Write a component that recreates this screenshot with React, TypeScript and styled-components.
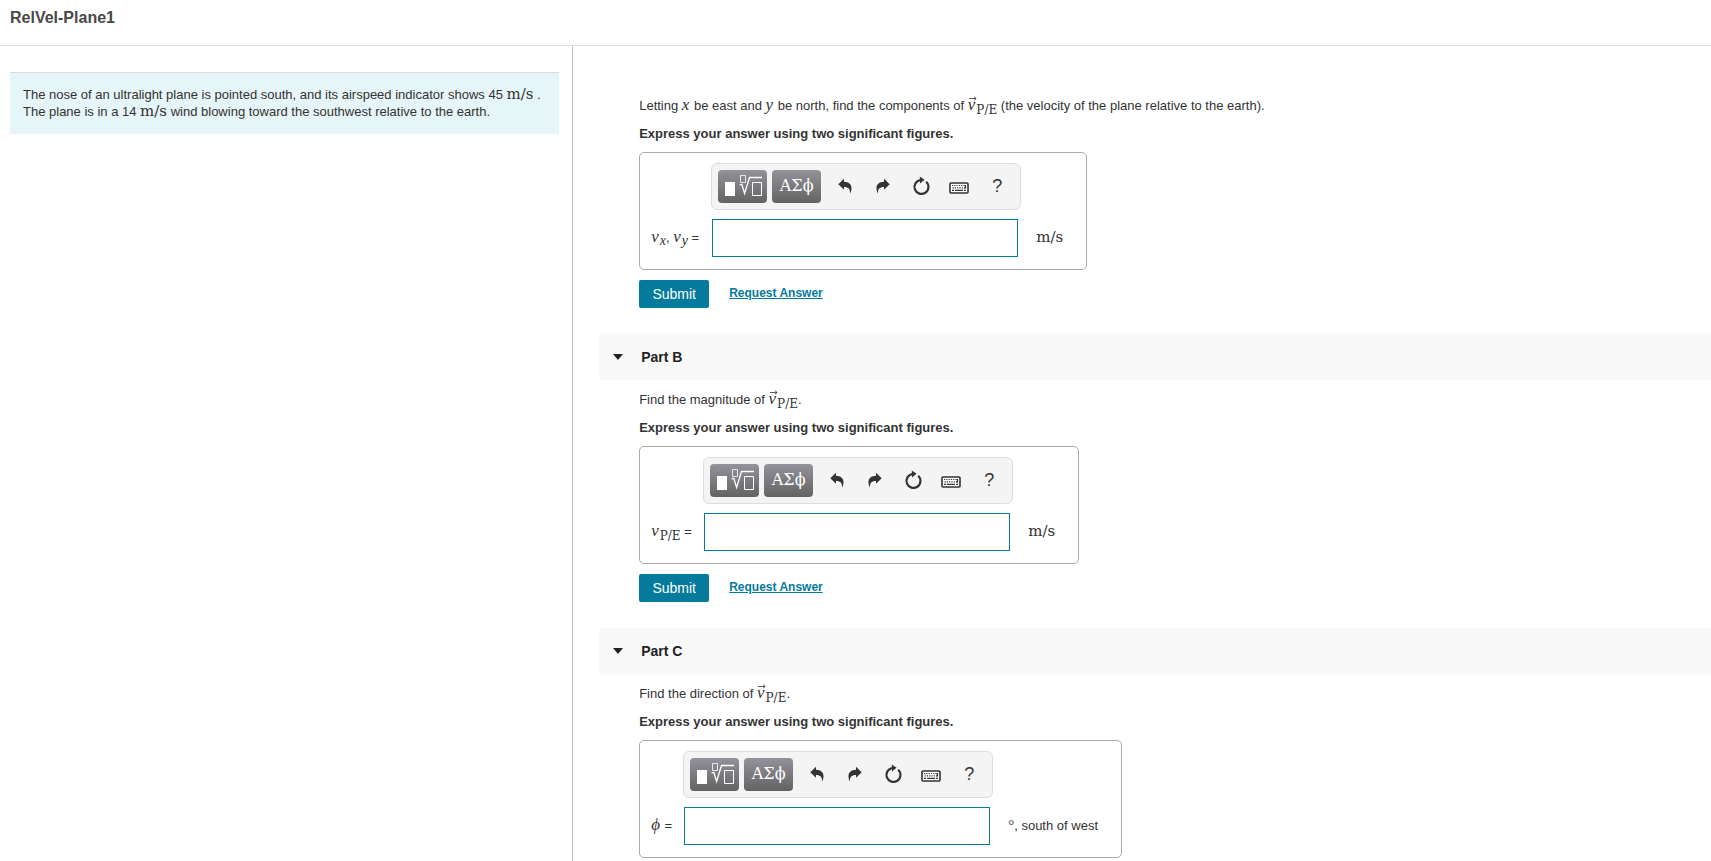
import React from "react";
import styled, { createGlobalStyle } from "styled-components";

const sans = `"Liberation Sans", Arial, Helvetica, sans-serif`;
const serif = `"Liberation Serif", "Times New Roman", serif`;
const slab = `"DejaVu Serif", Georgia, serif`;
const teal = "#047a9c";

const GlobalStyle = createGlobalStyle`
  *, *::before, *::after { box-sizing: border-box; }
  body {
    margin: 0;
    background: #fff;
    color: #333;
    font-family: ${sans};
    font-size: 13px;
  }
`;

const Page = styled.div`
  min-height: 100vh;
  display: flex;
  flex-direction: column;
`;

const Header = styled.header`
  padding: 9px 10px 18px;
  border-bottom: 1px solid #ddd;
`;

const Title = styled.h1`
  margin: 0;
  font-size: 16px;
  line-height: 18px;
  font-weight: bold;
  color: #484848;
`;

const Columns = styled.div`
  flex: 1;
  display: flex;
`;

const Side = styled.aside`
  flex: 0 0 33.5%;
  padding: 26px 13px 0 10px;
  border-right: 1px solid #b6c8d4;
`;

const Problem = styled.p`
  margin: 0;
  padding: 13px 13px 14px;
  border-top: 1px solid #d8dcdc;
  background: #e6f5f7;
  line-height: 17px;
`;

const Main = styled.main`
  flex: 1;
  min-width: 0;
  padding: 40px 0 0 26px;
`;

const PartHeader = styled.h2`
  display: flex;
  align-items: center;
  gap: 18px;
  height: 46px;
  margin: 0;
  padding-left: 14px;
  background: #f9f9f9;
  color: #222;
  font-size: 14px;
`;

const PartBody = styled.form`
  padding: 6px 24px 26px 40px;
  &:last-child { padding-bottom: 0; }
`;

const Prompt = styled.p<{ $strong?: boolean }>`
  margin: 0;
  line-height: 28px;
  font-weight: ${(p) => (p.$strong ? "bold" : "normal")};
`;

const AnswerBox = styled.div<{ $label: number }>`
  display: inline-grid;
  grid-template-columns: ${(p) => p.$label}px 306px auto;
  vertical-align: top;
  row-gap: 9px;
  margin-top: 4px;
  padding: 10px 23px 12px 11px;
  border: 1px solid #aaa;
  border-radius: 5px;
`;

const Toolbar = styled.div`
  grid-column: 2;
  display: flex;
  align-items: center;
  width: 310px;
  height: 47px;
  margin-left: -1px;
  padding: 0 4px 0 6px;
  border: 1px solid #ddd;
  border-radius: 6px;
  background: #f4f4f4;
`;

const PaletteButton = styled.button`
  display: grid;
  place-items: center;
  flex: none;
  width: 49px;
  height: 33px;
  margin-right: 5px;
  padding: 0 0 1px;
  border: 0;
  border-radius: 4px;
  background: linear-gradient(#94929a, #636363);
  color: #fff;
  font: 16px/30px ${slab};
`;

const IconButton = styled.button`
  display: grid;
  place-items: center;
  flex: 1;
  height: 33px;
  padding: 0 0 2px;
  border: 0;
  background: none;
  color: #333;
  font: 18px/30px ${sans};
`;

const FieldLabel = styled.label`
  grid-column: 1;
  align-self: center;
  padding-bottom: 2px;
  white-space: nowrap;
`;

const Field = styled.input`
  width: 306px;
  height: 38px;
  padding: 4px 8px;
  border: 1px solid ${teal};
  background: #fff;
  font: 16px ${serif};
`;

const Unit = styled.span`
  align-self: center;
  padding: 0 0 2px 18px;
`;

const Actions = styled.div`
  display: flex;
  align-items: center;
  gap: 20px;
  margin-top: 10px;
`;

const Submit = styled.button`
  width: 70px;
  height: 28px;
  padding: 0;
  border: 0;
  border-radius: 2px;
  background: ${teal};
  color: #fff;
  font: 14px ${sans};
`;

const RequestLink = styled.a`
  padding-bottom: 2px;
  color: ${teal};
  font-size: 12px;
  line-height: 24px;
  font-weight: bold;
`;

const MathText = styled.span`
  font-family: ${slab};
  font-size: 15px;
  line-height: 1px;
`;

const Var = styled.i`
  padding-right: 1px;
  font-family: ${serif};
  font-size: 17px;
  line-height: 1px;
`;

const Degree = styled.span`
  font-family: ${serif};
  font-size: 15px;
  line-height: 1px;
`;

const Sub = styled.sub`
  font-family: ${slab};
  font-size: 12px;
  line-height: 1px;
  vertical-align: -4px;
`;

const SubVar = styled.sub`
  font-family: ${serif};
  font-size: 14px;
  font-style: italic;
  line-height: 1px;
  vertical-align: -3px;
`;

const Vector = styled.span`
  position: relative;
  svg {
    position: absolute;
    left: 1px;
    top: -2px;
  }
`;

function VectorV() {
  return (
    <Vector>
      <svg width="8" height="5" viewBox="0 0 8 5" aria-hidden="true">
        <path d="M0 2.5H7M5 .7L7.2 2.5L5 4.3" fill="none" stroke="#333" strokeWidth=".8" />
      </svg>
      <Var>v</Var>
    </Vector>
  );
}

const SubPE = () => <Sub>P/E</Sub>;

function CurvedArrow({ flip }: { flip?: boolean }) {
  return (
    <svg width="14" height="16" viewBox="0 0 14 16" aria-hidden="true">
      <path
        transform={flip ? "translate(14 0) scale(-1 1)" : undefined}
        d="M.3 6.2L6 .8V3.7C10.8 3.8 13.7 6.4 13.5 10.4C13.4 12.6 12.9 14 12 15.4C12.3 11 10.6 8.9 6 8.9V11.8Z"
        fill="#333"
      />
    </svg>
  );
}

function Tools() {
  return (
    <Toolbar role="toolbar" aria-label="Equation tools">
      <PaletteButton type="button" aria-label="Templates">
        <svg width="49" height="32" viewBox="0 0 49 32" aria-hidden="true">
          <rect x="7" y="12" width="10" height="14" fill="#fff" />
          <g fill="none" stroke="#fff">
            <path d="M22.5 5.5h5v7h-5z" opacity=".8" />
            <path d="M21.5 15L23.8 14.3L26.6 23.5L31.5 7.5H44" strokeWidth="1.3" />
            <path d="M34.5 12.5h9v13h-9z" />
          </g>
        </svg>
      </PaletteButton>
      <PaletteButton type="button" aria-label="Symbols">ΑΣϕ</PaletteButton>
      <IconButton type="button" aria-label="Undo"><CurvedArrow /></IconButton>
      <IconButton type="button" aria-label="Redo"><CurvedArrow flip /></IconButton>
      <IconButton type="button" aria-label="Reset">
        <svg width="18" height="20" viewBox="0 0 18 20" aria-hidden="true">
          <path d="M14.2 5.8A7 7 0 1 1 8.5 4" fill="none" stroke="#333" strokeWidth="2.2" />
          <path d="M7.8 .6L12.6 3.8L8 7.4Z" fill="#333" />
        </svg>
      </IconButton>
      <IconButton type="button" aria-label="Keyboard shortcuts">
        <svg width="20" height="16" viewBox="0 0 20 16" aria-hidden="true">
          <rect x="1" y="5" width="18" height="10" rx="1" fill="#fff" stroke="#333" strokeWidth="1.6" />
          <path d="M3 7.5H17M3.5 9.8H17" stroke="#333" strokeWidth="1.2" strokeDasharray="1.2 1.1" />
          <path d="M3 12.4H5M6 12.4H14M15 12.4H17M16.4 7V10.5" stroke="#333" strokeWidth="1.3" />
        </svg>
      </IconButton>
      <IconButton type="button" aria-label="Help">?</IconButton>
    </Toolbar>
  );
}

type AnswerProps = {
  id: string;
  label: React.ReactNode;
  labelWidth: number;
  unit: React.ReactNode;
};

function Answer({ id, label, labelWidth, unit }: AnswerProps) {
  return (
    <>
      <Prompt $strong>Express your answer using two significant figures.</Prompt>
      <AnswerBox $label={labelWidth}>
        <Tools />
        <FieldLabel htmlFor={id}>{label} =</FieldLabel>
        <Field id={id} type="text" />
        <Unit>{unit}</Unit>
      </AnswerBox>
    </>
  );
}

function SubmitRow() {
  return (
    <Actions>
      <Submit type="button">Submit</Submit>
      <RequestLink href="#">Request Answer</RequestLink>
    </Actions>
  );
}

function PartTitle({ children }: { children: React.ReactNode }) {
  return (
    <PartHeader>
      <svg width="10" height="6" viewBox="0 0 10 6" aria-hidden="true">
        <path d="M0 0H10L5 6Z" fill="#222" />
      </svg>
      {children}
    </PartHeader>
  );
}

const Speed = () => <MathText>m/s</MathText>;

export default function App() {
  return (
    <Page>
      <GlobalStyle />
      <Header>
        <Title>RelVel-Plane1</Title>
      </Header>
      <Columns>
        <Side>
          <Problem>
            The nose of an ultralight plane is pointed south, and its airspeed indicator shows 45 <Speed /> .
            <br />
            The plane is in a 14 <Speed /> wind blowing toward the southwest relative to the earth.
          </Problem>
        </Side>
        <Main>
          <PartBody>
            <Prompt>
              Letting <Var>x</Var> be east and <Var>y</Var> be north, find the components of <VectorV />
              <SubPE /> (the velocity of the plane relative to the earth).
            </Prompt>
            <Answer
              id="components"
              label={<><Var>v</Var><SubVar>x</SubVar>, <Var>v</Var><SubVar>y</SubVar></>}
              labelWidth={61}
              unit={<Speed />}
            />
            <SubmitRow />
          </PartBody>
          <PartTitle>Part B</PartTitle>
          <PartBody>
            <Prompt>Find the magnitude of <VectorV /><SubPE />.</Prompt>
            <Answer id="magnitude" label={<><Var>v</Var><SubPE /></>} labelWidth={53} unit={<Speed />} />
            <SubmitRow />
          </PartBody>
          <PartTitle>Part C</PartTitle>
          <PartBody>
            <Prompt>Find the direction of <VectorV /><SubPE />.</Prompt>
            <Answer
              id="direction"
              label={<Var>ϕ</Var>}
              labelWidth={33}
              unit={<><Degree>°</Degree>, south of west</>}
            />
          </PartBody>
        </Main>
      </Columns>
    </Page>
  );
}
